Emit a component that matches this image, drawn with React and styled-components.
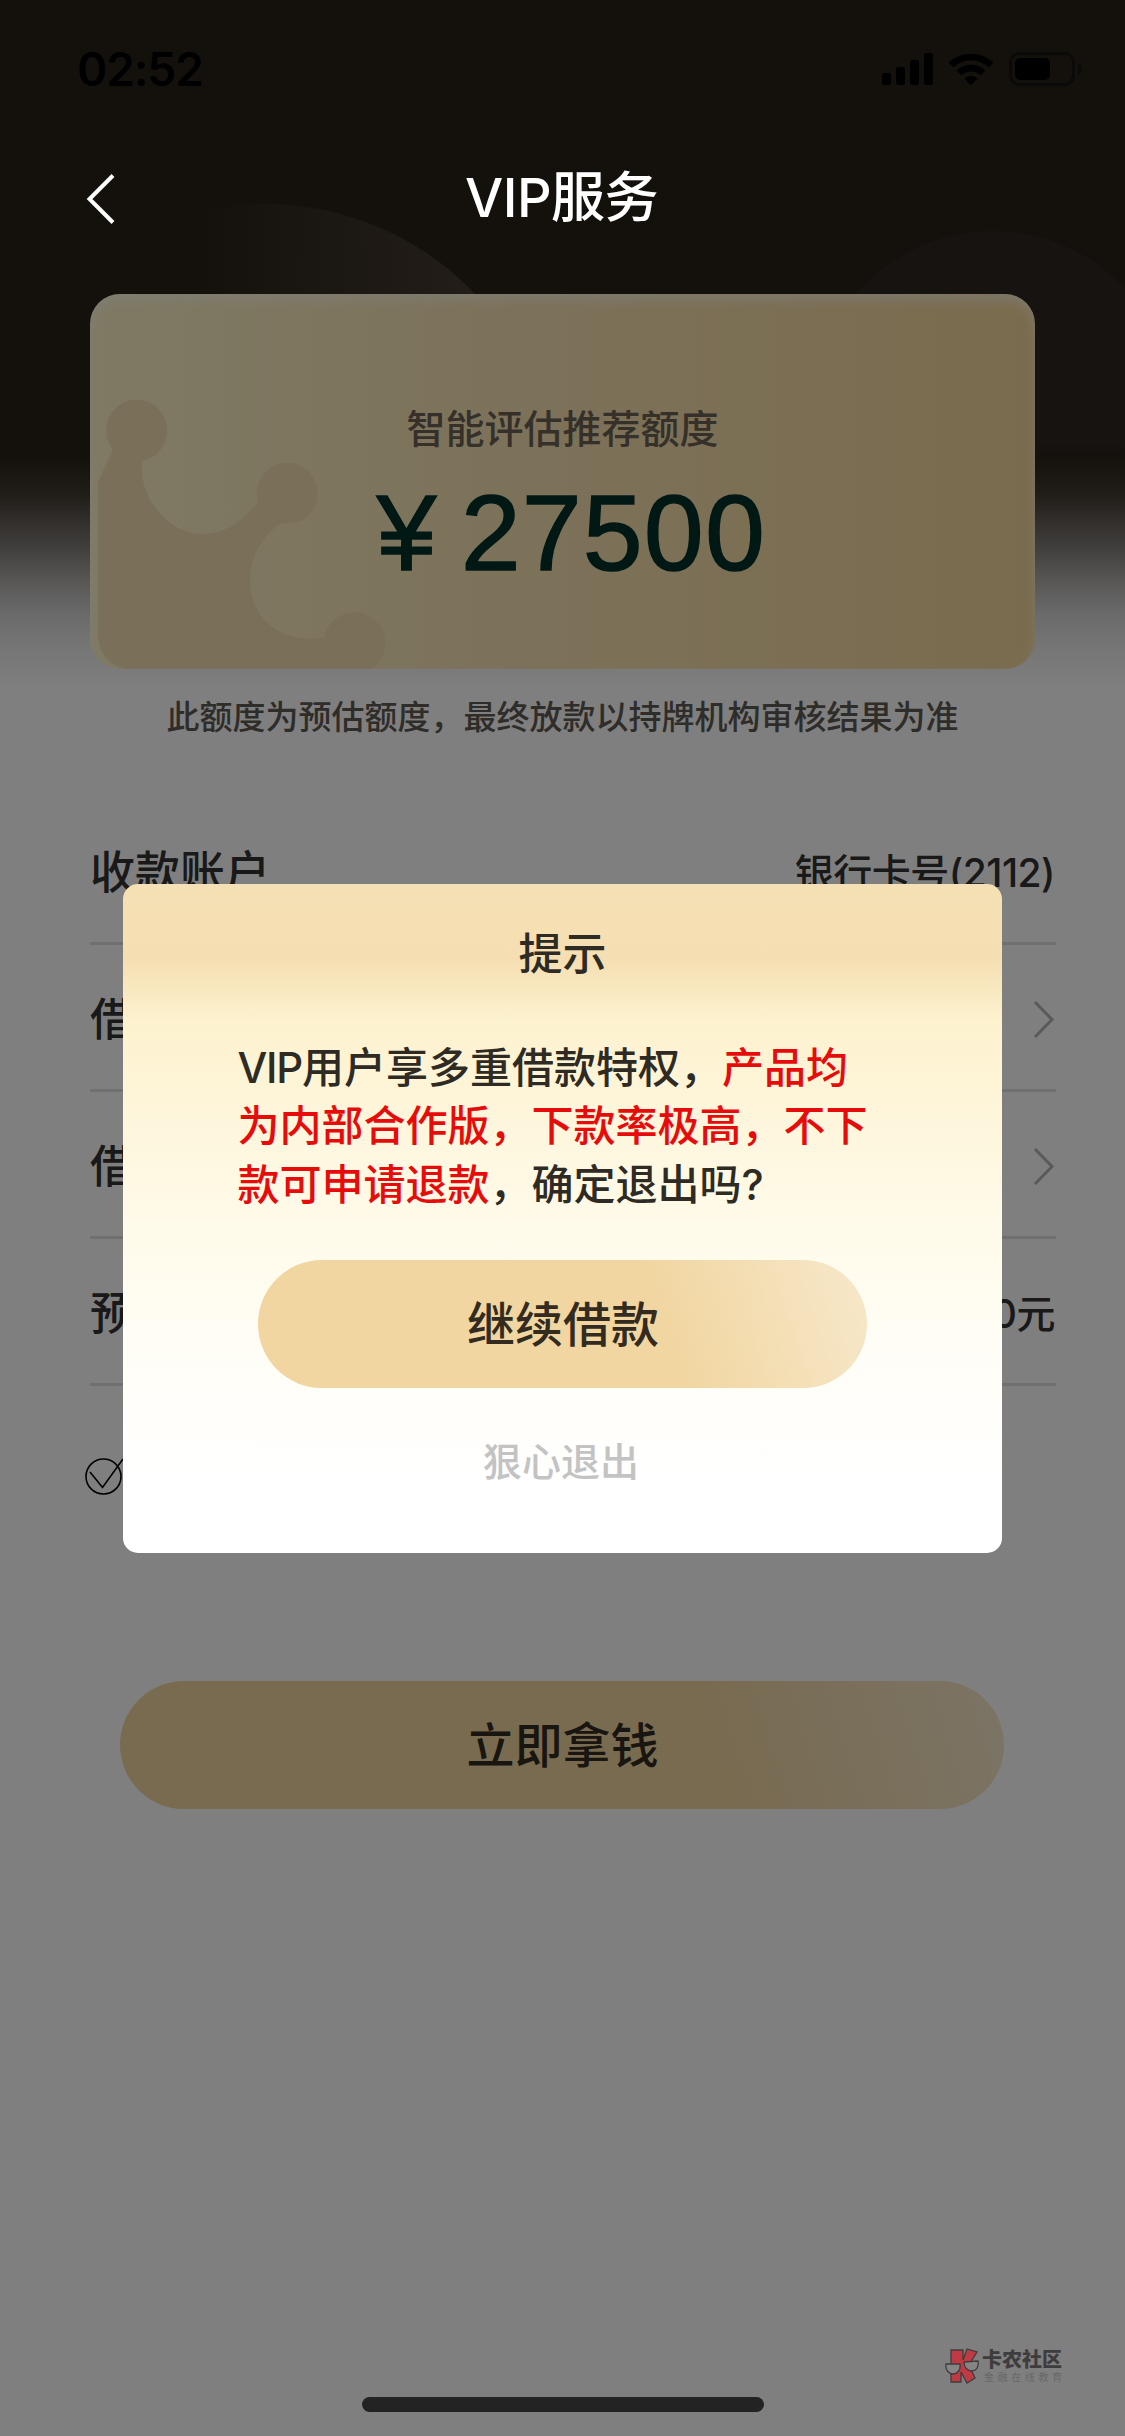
import React from "react";
import styled, { createGlobalStyle, css } from "styled-components";

const GlobalStyle = createGlobalStyle`
  * {
    box-sizing: border-box;
  }

  body {
    margin: 0;
    background: #fff;
    font-family: Inter, "Noto Sans CJK SC", sans-serif;
  }
`;

const Page = styled.div`
  position: relative;
  display: flex;
  flex-direction: column;
  width: 1125px;
  height: 2436px;
  overflow: hidden;
  background: #fff;
`;

const Backdrop = styled.svg`
  position: absolute;
  top: 0;
  left: 0;
`;

const StatusBar = styled.div`
  position: relative;
  display: flex;
  align-items: center;
  justify-content: space-between;
  height: 138px;
  padding: 0 42px 0 77px;
`;

const Time = styled.span`
  font-size: 46px;
  font-weight: 600;
  line-height: 1;
  letter-spacing: -1.1px;
  color: #000;
`;

const NavBar = styled.header`
  position: relative;
  z-index: 3;
  display: grid;
  grid-template-columns: 200px 1fr 200px;
  align-items: center;
  height: 120px;
  color: #fff;
`;

const BackButton = styled.button`
  display: flex;
  padding: 2px 0 0 85px;
  border: none;
  background: none;
  color: inherit;
`;

const NavTitle = styled.h1`
  margin: 0;
  padding-right: 2px;
  font-size: 54px;
  font-weight: 500;
  line-height: 1;
  text-align: center;
  letter-spacing: -0.5px;
`;

const Card = styled.section`
  position: relative;
  display: flex;
  flex-direction: column;
  align-items: center;
  height: 375px;
  margin: 36px 90px 0;
  padding-top: 106px;
  border-radius: 30px;
  overflow: hidden;
  background: linear-gradient(90deg, #fff4c8 0%, #f9e4b4 45%, #f5d79b 100%);

  &::after {
    content: "";
    position: absolute;
    inset: 0;
    border-radius: inherit;
    box-shadow: inset 0 6px 12px rgba(255, 255, 255, 0.55);
  }
`;

const Crown = styled.svg`
  position: absolute;
  top: 0;
  left: 0;
`;

const CardLabel = styled.div`
  position: relative;
  font-size: 39px;
  font-weight: 500;
  line-height: 58px;
  color: #6b6152;
`;

const Amount = styled.div`
  position: relative;
  margin: 15px 0 0 18px;
  font-family: "Liberation Sans", Arial, sans-serif;
  font-size: 107px;
  line-height: 120px;
  letter-spacing: 1.5px;
  word-spacing: -8px;
  -webkit-text-stroke: 1.6px #03302a;
  color: #03302a;
`;

const Note = styled.p`
  margin: 23px 0 0;
  font-size: 33px;
  font-weight: 500;
  line-height: 50px;
  text-align: center;
  color: #5e5a52;
`;

const List = styled.ul`
  margin: 56px 69px 0 90px;
  padding: 0;
  list-style: none;
`;

const Row = styled.li`
  display: flex;
  align-items: center;
  justify-content: space-between;
  height: 147px;
  padding-top: 4px;
  border-bottom: 3px solid #e0e0e0;
  color: #333;
`;

const RowLabel = styled.span`
  padding-bottom: 6px;
  font-size: 45px;
  font-weight: 500;
`;

const RowValue = styled.span`
  padding-right: 1px;
  padding-bottom: 5px;
  font-size: 39px;
  font-weight: 500;
  letter-spacing: -0.5px;
`;

const Agreement = styled.div`
  display: flex;
  align-items: center;
  height: 44px;
  margin: 69px 0 0 84px;
`;

const pill = css`
  display: block;
  height: 128px;
  padding: 1px 0 0 1px;
  border: none;
  border-radius: 64px;
  font-family: inherit;
  font-size: 48px;
  font-weight: 500;
  line-height: 127px;
  background: linear-gradient(72deg, #f1d6a1 0%, #f1d6a1 66%, #f7e8cb 100%);
  color: #332b20;
`;

const SubmitButton = styled.button`
  ${pill}
  width: 884px;
  margin: 182px auto 0 120px;
`;

const HomeIndicator = styled.div`
  width: 402px;
  height: 15px;
  margin: auto auto 24px;
  border-radius: 8px;
  background: #464646;
`;

const Mask = styled.div`
  position: absolute;
  inset: 0;
  z-index: 2;
  display: flex;
  align-items: center;
  justify-content: center;
  background: rgba(0, 0, 0, 0.5);
`;

const Dialog = styled.div`
  display: flex;
  flex-direction: column;
  align-items: center;
  width: 879px;
  height: 669px;
  padding-top: 37px;
  border-radius: 15px;
  background: linear-gradient(
    180deg,
    #f5e0b5 0,
    #f5dfb2 75px,
    #fdf2cf 138px,
    #fffae8 330px,
    #fffdf5 450px,
    #fff 600px
  );
  color: #2e2a24;
`;

const DialogTitle = styled.h2`
  margin: 0;
  font-size: 44px;
  font-weight: 500;
  line-height: 66px;
`;

const DialogText = styled.p`
  width: 650px;
  margin: 52px 0 0;
  font-size: 42px;
  font-weight: 500;
  line-height: 58.5px;
`;

const Latin = styled.span`
  letter-spacing: -1.2px;
`;

const Highlight = styled.span`
  color: #e60c0c;
`;

const ConfirmButton = styled.button`
  ${pill}
  width: 609px;
  margin-top: 46px;
`;

const LeaveButton = styled.button`
  margin-top: 45px;
  padding: 0 3px 0 0;
  border: none;
  background: none;
  font-family: inherit;
  font-size: 39px;
  font-weight: 500;
  line-height: 58px;
  color: #c3c3c3;
`;

const Watermark = styled.div`
  position: absolute;
  right: 61px;
  bottom: 52px;
  z-index: 4;
  display: flex;
  align-items: center;
  gap: 3px;
`;

const WatermarkText = styled.div`
  display: flex;
  flex-direction: column;
  width: 82px;
`;

const WatermarkName = styled.span`
  font-size: 20px;
  font-weight: 900;
  line-height: 22px;
  color: #3f3c3d;
`;

const WatermarkSlogan = styled.span`
  padding-left: 2px;
  font-size: 10px;
  line-height: 12px;
  letter-spacing: 3.6px;
  white-space: nowrap;
  color: #686868;
`;

const rows = [
  { label: "收款账户", value: "银行卡号(2112)" },
  { label: "借款金额" },
  { label: "借款期限" },
  { label: "预估额度", value: "27500元" },
];

const StatusIcons = () => (
  <svg width="206" height="40" viewBox="877 49 206 40">
    <rect x="882" y="73" width="9" height="12" rx="2.5" />
    <rect x="896" y="67" width="9" height="18" rx="2.5" />
    <rect x="910" y="60" width="9" height="25" rx="2.5" />
    <rect x="924" y="53" width="9" height="32" rx="2.5" />
    <path d="M948.500 62.500a33 33 0 0 1 45 0l-4.800 4.800a26 26 0 0 0-35.400 0z" />
    <path d="M956.500 70.500a21.500 21.500 0 0 1 29 0l-4.800 4.800a14.500 14.500 0 0 0-19.400 0z" />
    <path d="M964.500 78.500a10 10 0 0 1 13 0l-6.500 6.700z" />
    <rect x="1010.500" y="53.500" width="63" height="31" rx="9" fill="none" stroke="#181411" strokeWidth="3" />
    <rect x="1015" y="58" width="35" height="22" rx="5" />
    <path d="M1078 63c5 2 5 10 0 12z" fill="#181411" />
  </svg>
);

const Arrow = () => (
  <svg width="24" height="40" viewBox="0 0 24 40" fill="none" stroke="#b4b4b4" strokeWidth="3">
    <path d="M3 3 20 20.500 3 38" />
  </svg>
);

const HeaderArt = () => (
  <Backdrop width="1125" height="700" viewBox="0 0 1125 700">
    <defs>
      <linearGradient id="glow" gradientUnits="userSpaceOnUse" x1="195" y1="0" x2="480" y2="0">
        <stop offset="0" stopColor="#483c33" stopOpacity="0" />
        <stop offset="1" stopColor="#483c33" />
      </linearGradient>
      <linearGradient id="fade" gradientUnits="userSpaceOnUse" x1="0" y1="440" x2="0" y2="690">
        <stop offset="0" stopColor="#28221a" stopOpacity="0" />
        <stop offset="0.07" stopColor="#2a231b" />
        <stop offset="0.21" stopColor="#40382f" />
        <stop offset="0.32" stopColor="#625b56" />
        <stop offset="0.43" stopColor="#827e7b" />
        <stop offset="0.56" stopColor="#b0adab" />
        <stop offset="0.69" stopColor="#d4d3d3" />
        <stop offset="0.83" stopColor="#ececec" />
        <stop offset="1" stopColor="#fff" />
      </linearGradient>
    </defs>
    <rect width="1125" height="470" fill="#28221a" />
    <circle cx="265" cy="494" r="290" fill="url(#glow)" />
    <circle cx="993" cy="411" r="180" fill="#2e2722" />
    <rect y="440" width="1125" height="260" fill="url(#fade)" />
  </Backdrop>
);

const App = () => (
  <>
    <GlobalStyle />
    <Page>
      <HeaderArt />
      <StatusBar>
        <Time>02:52</Time>
        <StatusIcons />
      </StatusBar>
      <NavBar>
        <BackButton aria-label="返回">
          <svg width="32" height="52" viewBox="0 0 32 52" fill="none" stroke="currentColor" strokeWidth="4">
            <path d="M28 2.500 4.500 26 28 49.500" />
          </svg>
        </BackButton>
        <NavTitle>VIP服务</NavTitle>
      </NavBar>

      <Card>
        <Crown width="300" height="375" viewBox="0 0 300 375">
          <path
            fill="#f4deb2"
            d="M8 188 23 156A30.500 31 0 1 1 52 167C48 205 80 240 112 240C135 240 152 228 168 208A30.500 30.500 0 1 1 191 229C172 242 160 262 160 288C160 320 186 350 234 344A31 31 0 1 1 282 375H40C20 375 8 358 8 340Z"
          />
        </Crown>
        <CardLabel>智能评估推荐额度</CardLabel>
        <Amount>¥ 27500</Amount>
      </Card>
      <Note>此额度为预估额度，最终放款以持牌机构审核结果为准</Note>

      <List>
        {rows.map((row) => (
          <Row key={row.label}>
            <RowLabel>{row.label}</RowLabel>
            {row.value ? <RowValue>{row.value}</RowValue> : <Arrow />}
          </Row>
        ))}
      </List>

      <Agreement>
        <svg width="44" height="44" viewBox="0 0 44 44" fill="none" stroke="#000" strokeWidth="1.600">
          <circle cx="19.500" cy="21.500" r="17.500" />
          <path d="M6 17 18.500 32.500 39 4" />
        </svg>
      </Agreement>

      <SubmitButton>立即拿钱</SubmitButton>
      <HomeIndicator />

      <Mask>
        <Dialog role="dialog">
          <DialogTitle>提示</DialogTitle>
          <DialogText>
            <Latin>VIP</Latin>用户享多重借款特权，
            <Highlight>产品均为内部合作版，下款率极高，不下款可申请退款</Highlight>
            ，确定退出吗?
          </DialogText>
          <ConfirmButton>继续借款</ConfirmButton>
          <LeaveButton>狠心退出</LeaveButton>
        </Dialog>
      </Mask>

      <Watermark>
        <svg width="34" height="36" viewBox="0 0 34 36" stroke="#3f3c3d" strokeWidth="1.300">
          <path d="M6 2h12v10l4-11 10 3-8 13 6 13-8 5-6-11v10H6z" fill="#bf3a43" />
          <path d="M1 16h14c1 6-3 10-7 10s-8-4-7-10z" fill="#858585" />
          <path d="M19 14l14-1c1 6-2 10-6 10s-8-3-8-9z" fill="#858585" />
        </svg>
        <WatermarkText>
          <WatermarkName>卡农社区</WatermarkName>
          <WatermarkSlogan>金融在线教育</WatermarkSlogan>
        </WatermarkText>
      </Watermark>
    </Page>
  </>
);

export default App;
